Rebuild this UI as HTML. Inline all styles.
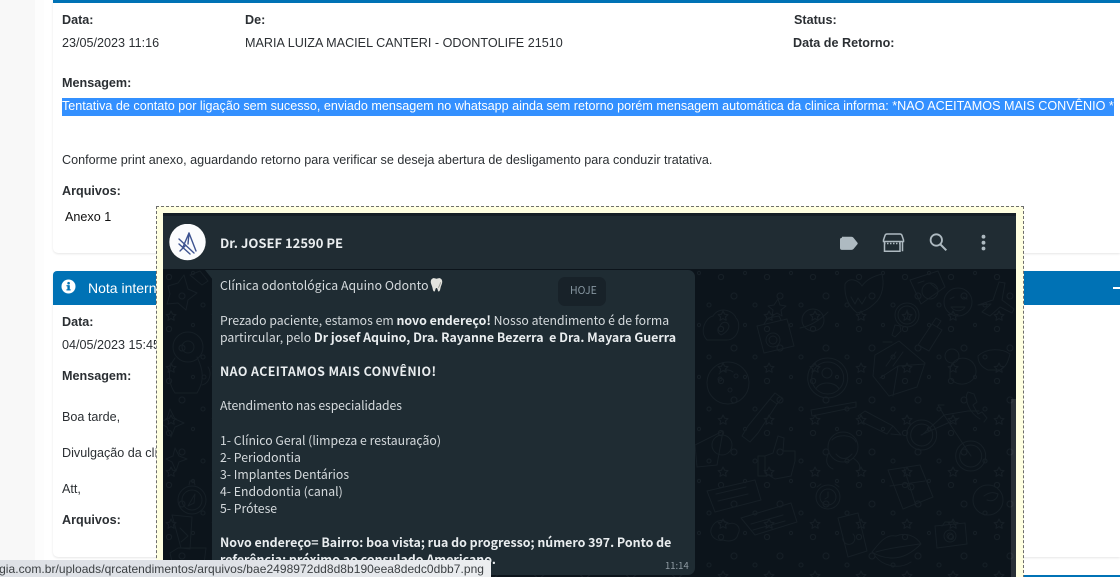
<!DOCTYPE html>
<html lang="pt-BR"><head><meta charset="utf-8"><title>Atendimento</title>
<style>
html,body{margin:0;padding:0;width:1120px;height:577px;overflow:hidden;background:#fff}
body{position:relative;font-family:"Liberation Sans",Arial,sans-serif;font-size:12.6px;color:#2b2f33}
.t{position:absolute;white-space:nowrap;line-height:16px;height:16px}
.b{font-weight:bold;color:#2b2f33}
.box{position:absolute}
.w{position:absolute;white-space:nowrap;font-family:"Noto Sans CJK SC","Liberation Sans",sans-serif;font-size:12.25px;line-height:18px;height:18px;color:#d5dadd}
.w b{font-weight:700;color:#e9edef;font-size:12.4px}
</style></head><body>
<div class="box" style="left:0;top:0;width:35px;height:577px;background:#f8f8f8"></div>
<div class="box" style="left:35px;top:0;width:9px;height:577px;background:#fdfdfd"></div>

<div class="box" style="left:53px;top:0;width:1067px;height:253px;background:#fff;border-radius:0 0 0 5px;box-shadow:0 1px 2px rgba(0,0,0,.1)"></div>
<div class="box" style="left:53px;top:0;width:1067px;height:3px;background:#0072b5"></div>

<div class="t b" style="left:62px;top:12px">Data:</div>
<div class="t b" style="left:245px;top:12px">De:</div>
<div class="t b" style="left:794px;top:12px">Status:</div>
<div class="t" style="left:62px;top:35px">23/05/2023 11:16</div>
<div class="t" style="left:245px;top:35px">MARIA LUIZA MACIEL CANTERI - ODONTOLIFE 21510</div>
<div class="t b" style="left:793px;top:35px">Data de Retorno:</div>
<div class="t b" style="left:62px;top:75px">Mensagem:</div>
<div class="box" style="left:62px;top:98px;width:1052px;height:18px;background:#3390ff"></div>
<div class="t" style="left:62px;top:98px;color:#fff">Tentativa de contato por ligação sem sucesso, enviado mensagem no whatsapp ainda sem retorno porém mensagem automática da clinica informa: *NAO ACEITAMOS MAIS CONVÊNIO *</div>
<div class="t" style="left:62px;top:152px">Conforme print anexo, aguardando retorno para verificar se deseja abertura de desligamento para conduzir tratativa.</div>
<div class="t b" style="left:62px;top:183px">Arquivos:</div>
<div class="t" style="left:65px;top:209px;color:#111">Anexo 1</div>

<div class="box" style="left:53px;top:271px;width:1067px;height:286px;background:#fff;border-radius:5px 0 0 5px;box-shadow:0 1px 2px rgba(0,0,0,.1)"></div>
<div class="box" style="left:53px;top:271px;width:1067px;height:34px;background:#0072b5;border-radius:4px 0 0 0"></div>
<svg class="box" style="left:61px;top:279px" width="15" height="15" viewBox="0 0 15 15"><circle cx="7.5" cy="7.5" r="7" fill="#fff"/><rect x="6.4" y="6.2" width="2.4" height="5" fill="#0072b5"/><rect x="5.4" y="6.2" width="2" height="1.1" fill="#0072b5"/><rect x="5.4" y="10.3" width="4.3" height="1.1" fill="#0072b5"/><circle cx="7.6" cy="4.2" r="1.3" fill="#0072b5"/></svg>
<div class="t" style="left:88px;top:280px;color:#fff;font-size:14px">Nota interna</div>
<div class="box" style="left:1113px;top:287px;width:7px;height:2px;background:#fff"></div>

<div class="t b" style="left:62px;top:314px">Data:</div>
<div class="t" style="left:62px;top:337px">04/05/2023 15:45</div>
<div class="t b" style="left:62px;top:368px">Mensagem:</div>
<div class="t" style="left:62px;top:409px">Boa tarde,</div>
<div class="t" style="left:62px;top:445px">Divulgação da clínica</div>
<div class="t" style="left:62px;top:481px">Att,</div>
<div class="t b" style="left:62px;top:512px">Arquivos:</div>

<div class="box" style="left:53px;top:575px;width:1067px;height:2px;background:#0072b5"></div>

<!-- popup frame -->
<div class="box" style="left:156px;top:206px;width:866px;height:380px;background:#ffffe1;border:1px dashed #6e6e6e;box-sizing:content-box"></div>
<div class="box" style="left:163px;top:213px;width:853px;height:364px;background:#0c141b;overflow:hidden">
  <div class="box" style="left:0;top:0;width:853px;height:3px;background:#161f26"></div>
  <div class="box" style="left:0;top:3px;width:853px;height:53px;background:#202c33"></div>
</div>

<!-- doodles -->
<svg class="box" style="left:163px;top:269px" width="853" height="308" viewBox="163 269 853 308" fill="none" stroke="#161f26" stroke-width="1" stroke-linecap="round" stroke-linejoin="round">
  <defs><pattern id="p" x="163" y="269" width="46" height="52" patternUnits="userSpaceOnUse"><circle cx="6" cy="8" r="2.6"/><circle cx="30" cy="4" r="1.6"/><circle cx="19" cy="27" r="3"/><circle cx="40" cy="36" r="2"/><path d="M8 42l1.6 3.2 3.4.4-2.500 2.300.7 3.400-3.200-1.700-3 1.700.6-3.400-2.500-2.300 3.400-.4z"/></pattern></defs>
  <rect x="163" y="269" width="853" height="308" fill="url(#p)" stroke="none"/>
  <!-- right side -->
  <circle cx="827.700" cy="378" r="20"/><circle cx="827.700" cy="378" r="16"/><circle cx="827" cy="373" r="5"/><path d="M816 389c3-8 19-8 23 0"/>
  <circle cx="921.700" cy="435" r="15"/><circle cx="921.700" cy="435" r="11"/><circle cx="970.700" cy="456" r="15"/><circle cx="970.700" cy="456" r="11"/><path d="M922 435l22-20 27 41M944 415l-6-10h6M944 415l24-4h11M921 435l38-17"/>
  <path d="M875 355l24-14 26 22 -8 24-28 9-16-20zM880 378l18-12 27 -2M893 396l5-30M896 352l-10 14M903 352l-10 14" />
  <circle cx="813" cy="320" r="11"/><path d="M800 328c10-2 20-8 28-16"/>
  <path d="M845 284c5-8 14-3 17 2 4-6 12-10 20-12 2 8 2 22-8 30-6 6-12 8-17 9-7-6-13-14-12-29zM851 297l4 7 3-6 4 6 4-7"/>
  <circle cx="958" cy="302" r="14"/><path d="M950 299l4-2M963 297l4 2M951 307c4 5 11 5 14 0z"/>
  <path d="M978 305l15-5 6-18 6 1-3 17 12 9-2 4-12-6-10 9-8-4 9-8z"/>
  <path d="M910 280l28-9 7 16-24 17zM918 283l6-2M930 283l7 6"/><circle cx="930" cy="291" r="8"/>
  <path d="M918 345l14-21 10 6-13 21zM932 324l4-6 5 3-4 6"/>
  <circle cx="907" cy="315" r="12"/><circle cx="907" cy="315" r="9"/><path d="M907 310l1 6-2 3"/>
  <path d="M838 518l20-5 9 38-19 6zM853 534a6 6 0 1 1-10 3"/>
  <path d="M935 526l30-3 2 21-30 4zM942 526l3-4h8l2 3"/><circle cx="950" cy="536" r="6"/><circle cx="950" cy="536" r="3"/>
  <path d="M872 552c8-10 14-18 24-16 10-4 20 0 25 8-8 8-18 14-28 14-8 0-15-2-21-6zM876 552c12-4 30-6 44-8M875 556c8 10 24 14 36 6"/>
  <path d="M888 470l32-5 13 32-30 12zM904 468l12 38M890 486l35-5"/><circle cx="911" cy="487" r="3"/>
  <circle cx="828" cy="497" r="12"/><circle cx="828" cy="497" r="8"/><path d="M828 492v5l-3 2M817 487l4-3M839 487l-4-3"/>
  <circle cx="843" cy="447" r="15"/><path d="M832 440c5-6 20-6 24 2M829 452c-4 8-3 14 4 17M853 458c6 4 8 8 6 12M836 454c5 6 11 6 16 0"/>
  <path d="M978 356c8-8 24-8 32-2 -2 8-4 13-10 16h-12c-7-3-10-8-10-14z"/>
  <circle cx="988" cy="500" r="15"/><path d="M984 496c5-4 10-4 14-2-1 6-6 8-11 6"/>
  <path d="M858 416l7 -5 28 15-6 8 -25-12zM893 426l8 9-10-1"/>
  <path d="M811 410l45-8v5l-44 9z"/>
  <path d="M968 392c-4 6 0 20 12 27M968 392l6 2 3 8-4 3 5 9 4-2 5 6-3 4"/>
  <path d="M895 325l-3 10 3 2 6-6-1-5z M883 342l9 0"/>
  <path d="M945 356a7 7 0 1 0 14 0 7 7 0 1 0-14 0"/><path d="M950 372a13 13 0 1 1 24 6c-4 6-16 10-24 0z"/>
  <path d="M778 299l2 6 6 1-5 4 1 6-5-3-5 3 1-6-5-4 6-1z"/>
  <!-- centre-right band -->
  <path d="M713 316c6-10 20-6 23 2 6 6 2 22-9 22h-20c-8-8-2-22 6-24zM720 326c2-5 8-5 9 0 0 4-5 8-8 9-3-2-5-6-1-9z"/>
  <path d="M757 326l30-7 7 27-30 7zM764 324l4-6 11-2 2 4"/><circle cx="773" cy="340" r="7"/><circle cx="773" cy="340" r="4"/>
  <circle cx="728" cy="383" r="21"/><circle cx="720" cy="379" r="2"/><circle cx="736" cy="376" r="2"/><circle cx="730" cy="390" r="2"/><path d="M719 374c4-5 10-5 14-2"/>
  <path d="M750 442l-8-6 6-10 22-27 7 5-19 29zM770 399l5-6 7 5-5 6"/>
  <path d="M765 473v-17l8-3 5-17 6 2-1 13h12v10l-4 15-16 3zM765 456h-7v20h7"/>
  <path d="M707 491l48-11 6 20-46 12zM716 494l30-7M718 501l30-7"/>
  <path d="M741 518l50-15 6 19-42 13zM751 524l32-9M753 530l32-9"/>
  <path d="M712 527c4-8 12-8 16-3 7-3 14 3 10 10-1 7-9 8-15 6-8 2-15-6-11-13z"/>
  <path d="M695 445l28-14-6 34-20 2z"/><circle cx="722" cy="445" r="10"/>
  <!-- left side -->
  <circle cx="192" cy="500" r="14"/><circle cx="192" cy="500" r="10"/><path d="M188 506l7-12-1 9-6 3zM189 485l1-4h4l1 4"/>
  <circle cx="188" cy="347" r="15"/><circle cx="188" cy="347" r="6"/><path d="M175 358c-8 10-7 25 0 35h22c6-10 8-20 0-36M202 385c8-2 10-12 6-18"/><circle cx="204" cy="377" r="2"/>
  <path d="M168 286l10-3 6-8 4 14 9 4-9 7-2 10-8-7-11 1 3-10zM190 275l12 10 6-4-8-10z"/>
  <path d="M170 409l5 10 9 4-9 4-4 10-4-10-8-4 8-4zM175 448l4 8 8 3-8 3-3 9-4-9-6-3 7-3z"/>
  <path d="M172 515l20 2-2 32-9-1zM180 528l8 8-7 6"/><path d="M170 553l8-5 28 0 -3 24-28 2z"/>
</svg>

<!-- header content -->
<svg class="box" style="left:169px;top:224px" width="37" height="37" viewBox="0 0 37 37"><circle cx="18.500" cy="18" r="18.200" fill="#fbfcfd"/><g stroke="#3d5390" stroke-width="1.400" fill="none" stroke-linecap="round"><path d="M20 9l7 18M20 9l-6 14M20 9l-1 11M10 15l15 14M10 20l11 10M11 27l5-5"/></g></svg>
<div class="w" style="left:220px;top:234px;font-size:13px;font-weight:700;color:#e9edef">Dr. JOSEF 12590 PE</div>

<svg class="box" style="left:836px;top:230px" width="156" height="26" viewBox="836 230 156 26" fill="none" stroke="#aebac1">
  <path d="M842 236.800h9.500q1.200 0 2 .9l4 5q.5.700 0 1.400l-4 4.900q-.800.900-2 .9h-9.500q-2 0-2-2v-8.100q0-2 2-2z" fill="#aebac1" stroke="none"/>
  <path d="M887 234h13q1.500 0 2 1.500l1.500 4.500v1.500h-20v-1.500l1.500-4.500q.5-1.500 2-1.500z" stroke-width="1.500"/>
  <path d="M884.500 242v9.300h15.500V242M902.500 242v9.300" stroke-width="1.500"/>
  <path d="M884 243.500h19" stroke-dasharray="1.500 1.500" stroke-width="1.500"/>
  <circle cx="936.300" cy="240" r="5.700" stroke-width="1.800"/><path d="M940.500 244.500l5.800 5.800" stroke-width="2"/>
  <g fill="#aebac1" stroke="none"><circle cx="983.500" cy="236.700" r="1.900"/><circle cx="983.500" cy="242.700" r="1.900"/><circle cx="983.500" cy="248.500" r="1.900"/></g>
</svg>

<!-- bubble -->
<div class="box" style="left:212px;top:270px;width:483px;height:305px;background:#1f2c33;border-radius:0 7px 7px 7px"></div>
<svg class="box" style="left:205px;top:270px" width="8" height="12"><path d="M0 0h8v10z" fill="#1f2c33"/></svg>

<div class="w" style="left:220px;top:276px;letter-spacing:.05px">Clínica odontológica Aquino Odonto</div>
<svg class="box" style="left:430px;top:277px" width="13" height="16" viewBox="0 0 14 16"><path d="M3 .8c1.500-.6 2.800.3 4 .5 1.200-.2 2.500-1.100 4-.5 2 .8 2.500 3.200 2 5.200-.5 2-1.300 3.200-1.700 5.200-.3 1.500-.7 3.800-1.900 3.800-1.300 0-.9-3.800-2.400-3.800-1.500 0-1.100 3.800-2.400 3.800-1.200 0-1.600-2.300-1.900-3.800C2.300 9.200 1.500 8 1 6 .5 4 1 1.600 3 .8z" fill="#e3e3de"/><path d="M9 11c1-2 2-4 2.500-6" stroke="#9e9e98" fill="none"/></svg>
<div class="w" style="left:220px;top:311px">Prezado paciente, estamos em <b>novo endereço!</b> Nosso atendimento é de forma</div>
<div class="w" style="left:220px;top:328px">partircular, pelo <b>Dr josef Aquino, Dra. Rayanne Bezerra&nbsp; e Dra. Mayara Guerra</b></div>
<div class="w" style="left:220px;top:362px;letter-spacing:.4px"><b>NAO ACEITAMOS MAIS CONVÊNIO!</b></div>
<div class="w" style="left:220px;top:396px;letter-spacing:-.1px">Atendimento nas especialidades</div>
<div class="w" style="left:220px;top:431px">1- Clínico Geral (limpeza e restauração)</div>
<div class="w" style="left:220px;top:448px">2- Periodontia</div>
<div class="w" style="left:220px;top:465px">3- Implantes Dentários</div>
<div class="w" style="left:220px;top:482px">4- Endodontia (canal)</div>
<div class="w" style="left:220px;top:499px">5- Prótese</div>
<div class="w" style="left:220px;top:533px"><b>Novo endereço= Bairro: boa vista; rua do progresso; número 397. Ponto de</b></div>
<div class="w" style="left:220px;top:550px"><b>referência: próximo ao consulado Americano.</b></div>
<div class="w" style="left:665px;top:556px;font-size:9.5px;color:#8f9ba3">11:14</div>

<div class="box" style="left:558px;top:277px;width:48px;height:29px;background:#182229;border-radius:7px"></div>
<div class="w" style="left:570px;top:282px;font-size:10.5px;color:#8696a0">HOJE</div>

<div class="box" style="left:1011px;top:399px;width:5px;height:178px;background:rgba(255,255,255,.12)"></div>

<!-- status bar -->
<div class="box" style="left:0;top:560px;width:491px;height:17px;background:linear-gradient(90deg,#dee1e6 0,#dee1e6 45%,#eceef0 100%);border-radius:0 3px 0 0;overflow:hidden">
  <div style="position:absolute;right:7px;top:1px;white-space:nowrap;font-size:12px;line-height:17px;color:#3c4043;letter-spacing:.04px">https://www.tecnologia.com.br/uploads/qrcatendimentos/arquivos/bae2498972dd8d8b190eea8dedc0dbb7.png</div>
</div>
</body></html>
